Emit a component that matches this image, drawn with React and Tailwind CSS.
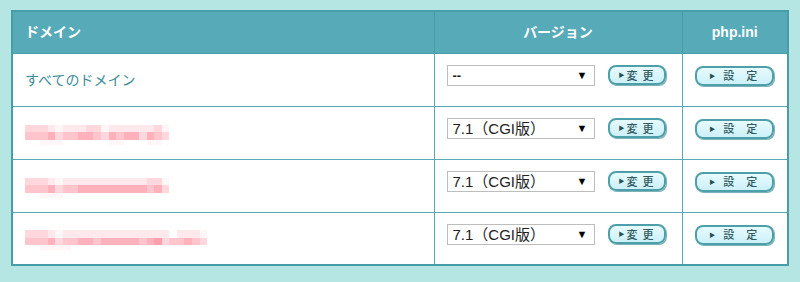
import React from 'react';

// mosaic shades, darkest first
const S = {
  A: 'bg-[#ff9fab]',
  B: 'bg-[#ffb1bb]',
  C: 'bg-[#ffc4cc]',
  D: 'bg-[#ffd7dd]',
  E: 'bg-[#ffe9ed]',
  F: 'bg-[#fff6f7]',
  W: 'bg-white',
};

const mosaics = [
  {
    top: 'DDDEFEEEDDFEEEEEEDF',
    mid: 'CCCBDCCBBCDBCBBDBCD',
    low: 'WWFFFWWWWWWFFWWWFFW',
  },
  {
    top: 'DDDEFEEEEEEEEEEEDDF',
    mid: 'CCCBDCCBBBBBBBBBCBD',
    low: 'WWFFFWWWWWWWWWWWWWW',
  },
  {
    top: 'DDDEFEEEEEEEEEEEEEEWEEEF',
    mid: 'CCCBDCCBBCBBBBBCBADCCBCD',
    low: 'WWFFFFWWWWWWWWWWWWWWWWWW',
  },
];

const Mosaic = ({ m }) => (
  <div className="flex flex-col">
    {[m.top, m.mid, m.low].map((row, i) => (
      <div key={i} className={i === 2 ? 'flex h-[5px]' : 'flex h-[7.5px]'}>
        {row.split('').map((c, j) => (
          <div key={j} className={`w-[7.6px] ${S[c]}`}></div>
        ))}
      </div>
    ))}
  </div>
);

const Select = ({ value }) => (
  <div className="flex items-center justify-between w-[148px] h-[21px] border border-[#bdbdbd] bg-white pl-[5px] pr-[6px] text-[15px] text-[#222] leading-none">
    <span className={value === '--' ? 'font-bold text-[13px]' : ''}>{value}</span>
    <span className="text-[11px] text-black">▼</span>
  </div>
);

const Btn = ({ label, wide }) => (
  <button
    className={`flex items-center h-[20px] ${wide ? 'w-[79px] pl-[12px]' : 'w-[58px] pl-[9px]'} rounded-[8px] border-2 border-[#4d9fa9] bg-gradient-to-b from-[#e6fbff] to-[#cdf0f9] shadow-[1px_1px_0_#7fb2b8] text-[11px] font-medium text-[#2f5a60] leading-none`}
    style={{ fontFamily: '"Noto Sans CJK JP", sans-serif' }}
  >
    <span className="text-[6px] mr-[2px] text-[#245056]">▶</span>
    <span className={wide ? 'tracking-[12px] ml-[6px]' : 'tracking-[5px]'}>{label}</span>
  </button>
);

const rows = [
  { name: 'すべてのドメイン', value: '--' },
  { mosaic: mosaics[0], value: '7.1（CGI版）' },
  { mosaic: mosaics[1], value: '7.1（CGI版）' },
  { mosaic: mosaics[2], value: '7.1（CGI版）' },
];

export default function App() {
  return (
    <div
      className="w-[800px] h-[282px] bg-[#b5e6e3] pt-[10px] pl-[11px]"
      style={{ fontFamily: '"Liberation Sans", "Noto Sans CJK JP", sans-serif' }}
    >
      <table className="w-[778px] border-collapse border-2 border-[#479ea8] bg-white">
        <thead>
          <tr className="h-[42px] bg-[#57aab8] text-white text-[14px] font-bold">
            <th className="w-[422px] text-left pl-[12px] border border-[#479ea8]">ドメイン</th>
            <th className="w-[248px] text-center border border-[#479ea8]">バージョン</th>
            <th className="text-center border border-[#479ea8]">php.ini</th>
          </tr>
        </thead>
        <tbody>
          {rows.map((r, i) => (
            <tr key={i} className="h-[53px]">
              <td className="pl-[12px] border border-[#5aaab4] align-middle">
                {r.name ? (
                  <span className="text-[14px] text-[#3d8d98]">{r.name}</span>
                ) : (
                  <div className="pt-[4px]">
                    <Mosaic m={r.mosaic} />
                  </div>
                )}
              </td>
              <td className="border border-[#5aaab4] align-top pl-[12px] pt-[11px]">
                <div className="flex items-center gap-[13px]">
                  <Select value={r.value} />
                  <Btn label="変更" />
                </div>
              </td>
              <td className="border border-[#5aaab4] align-top pt-[12px]">
                <div className="flex justify-center">
                  <Btn label="設定" wide />
                </div>
              </td>
            </tr>
          ))}
        </tbody>
      </table>
    </div>
  );
}
